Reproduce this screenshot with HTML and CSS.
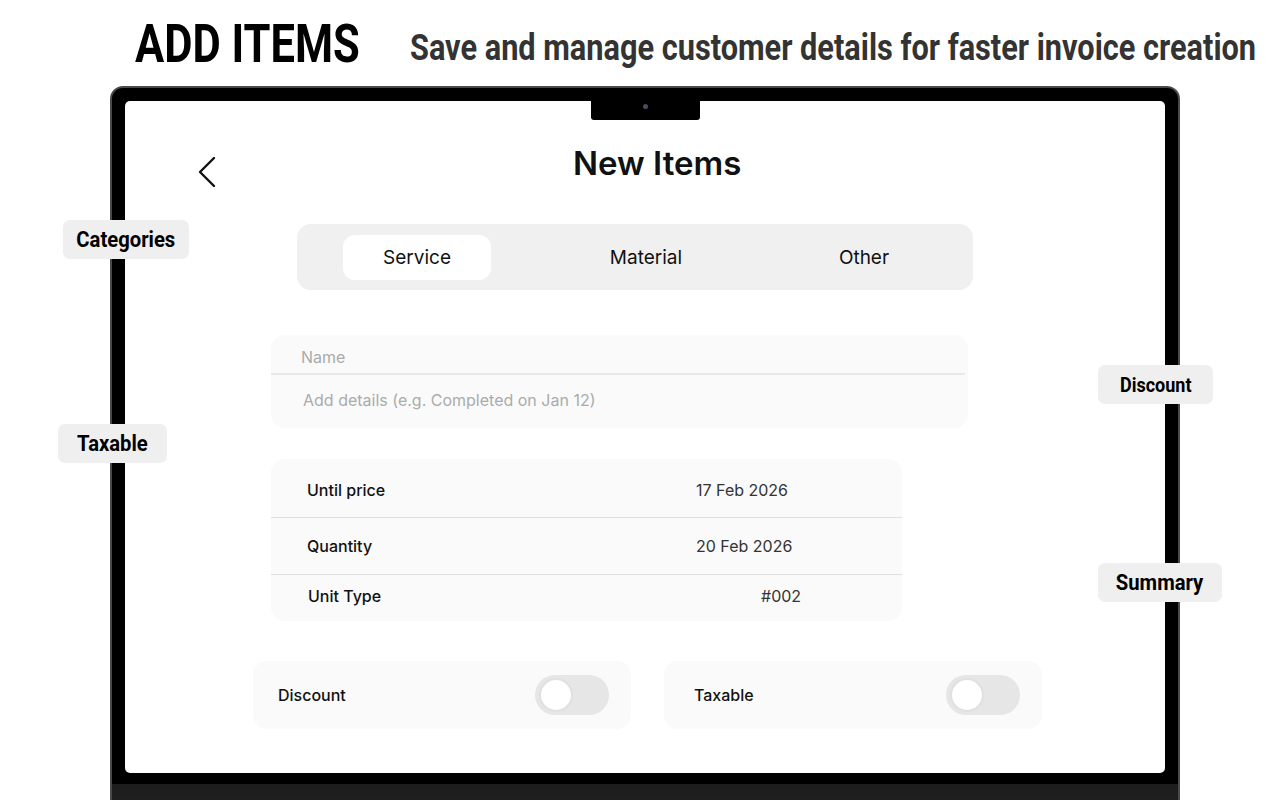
FILE: index.html
```html
<!DOCTYPE html>
<html lang="en">
<head>
<meta charset="utf-8">
<title>Add Items</title>
<link rel="stylesheet" href="styles.css">
</head>
<body>
<header class="hero">
  <h1 class="hero-title"><span>ADD ITEMS</span></h1>
  <p class="hero-sub"><span>Save and manage customer details for faster invoice creation</span></p>
</header>

<div class="laptop">
  <div class="screen">
    <div class="notch"><span class="cam"></span></div>
    <div class="topbar">
      <svg class="back" width="20" height="32" viewBox="0 0 20 32"><polyline points="17,2 3,16 17,30" fill="none" stroke="#111" stroke-width="2.4" stroke-linecap="round" stroke-linejoin="round"/></svg>
      <h2 class="title">New Items</h2>
    </div>

    <div class="segmented">
      <div class="seg seg-1 active">Service</div>
      <div class="seg seg-2">Material</div>
      <div class="seg seg-3">Other</div>
    </div>

    <div class="card name-card">
      <div class="name-row">Name</div>
      <div class="divider"></div>
      <div class="details-row">Add details (e.g. Completed on Jan 12)</div>
    </div>

    <div class="card table-card">
      <div class="trow trow-1"><span class="tlabel">Until price</span><span class="tval">17 Feb 2026</span></div>
      <div class="divider"></div>
      <div class="trow trow-2"><span class="tlabel">Quantity</span><span class="tval">20 Feb 2026</span></div>
      <div class="divider"></div>
      <div class="trow trow-3"><span class="tlabel tlabel-3">Unit Type</span><span class="tval tval-3">#002</span></div>
    </div>

    <div class="toggles">
      <div class="card toggle-card tc-1"><span class="tg-label">Discount</span><span class="switch"><span class="knob"></span></span></div>
      <div class="card toggle-card tc-2"><span class="tg-label">Taxable</span><span class="switch"><span class="knob"></span></span></div>
    </div>
  </div>
  <div class="chin"></div>
  <div class="base"></div>
</div>

<div class="tag tag-categories"><span>Categories</span></div>
<div class="tag tag-taxable"><span>Taxable</span></div>
<div class="tag tag-discount"><span>Discount</span></div>
<div class="tag tag-summary"><span>Summary</span></div>
</body>
</html>
```
FILE: styles.css
```css
html, body {
  margin: 0;
  padding: 0;
  background: #ffffff;
  overflow: hidden;
  height: 800px;
}
body {
  position: relative;
  font-family: "Inter", "Noto Sans", sans-serif;
  color: #111;
}

/* header */
.hero {
  height: 86px;
  box-sizing: border-box;
  padding-left: 135px;
  padding-top: 18px;
  display: flex;
  align-items: flex-start;
  white-space: nowrap;
  overflow: hidden;
}
.hero-title {
  margin: 0;
  width: 275px;
  flex: none;
  font-family: "Roboto", "Liberation Sans", sans-serif;
  font-weight: 700;
  font-size: 53px;
  line-height: 53px;
  color: #000;
}
.hero-title span {
  display: inline-block;
  transform: scaleX(0.82);
  transform-origin: left center;
}
.hero-sub span {
  display: inline-block;
  transform: scaleX(0.83);
  transform-origin: left center;
}
.hero-sub {
  margin: 0;
  flex: none;
  font-family: "Roboto", "Liberation Sans", sans-serif;
  font-weight: 700;
  font-size: 37px;
  line-height: 59px;
  color: #333;
}

/* laptop */
.laptop {
  margin-left: 110px;
  width: 1070px;
  box-sizing: border-box;
  border: 2px solid #4a4a4a;
  border-bottom: 0;
  border-radius: 13px 13px 0 0;
  background: #000;
  padding: 13px 13px 0;
}
.screen {
  position: relative;
  height: 672px;
  background: #fff;
  border-radius: 5px;
  overflow: hidden;
}
.chin {
  height: 11px;
  background: #000;
}
.base {
  height: 30px;
  margin: 0 -13px;
  background: linear-gradient(#1c1c1c, #222);
}
.notch {
  position: absolute;
  top: 0;
  left: 466px;
  width: 109px;
  height: 19px;
  background: #000;
  border-radius: 0 0 3px 3px;
}
.cam {
  position: absolute;
  left: 52px;
  top: 3px;
  width: 5px;
  height: 5px;
  border-radius: 50%;
  background: #4a4a62;
}

/* top bar */
.topbar {
  display: flex;
  align-items: flex-start;
  height: 123px;
}
.back {
  margin: 55px 0 0 72px;
  flex: none;
}
.title {
  margin: 41px 0 0 356px;
  font-size: 33px;
  line-height: 42px;
  font-weight: 600;
  color: #111;
}

/* segmented */
.segmented {
  margin-left: 172px;
  width: 676px;
  height: 66px;
  box-sizing: border-box;
  background: #f0f0f0;
  border-radius: 14px;
  display: flex;
  align-items: center;
  padding-left: 46px;
}
.seg {
  width: 148px;
  height: 45px;
  border-radius: 12px;
  display: flex;
  align-items: center;
  justify-content: center;
  font-size: 19px;
  color: #111;
}
.seg.active { background: #fff; }
.seg-2 { margin-left: 81px; }
.seg-3 { margin-left: 70px; }

/* cards */
.card {
  background: #fafafa;
  border-radius: 14px;
}
.divider {
  height: 2px;
  background: #e8e8e8;
}
.name-card {
  margin: 45px 0 0 146px;
  width: 697px;
  height: 93px;
  font-size: 16px;
  color: #ababab;
}
.name-card .divider { margin-right: 3px; }
.name-row {
  height: 32px;
  padding-top: 6px;
  display: flex;
  align-items: center;
  padding-left: 30px;
}
.details-row {
  height: 49px;
  padding-bottom: 4px;
  display: flex;
  align-items: center;
  padding-left: 32px;
}

.table-card {
  margin: 31px 0 0 146px;
  width: 631px;
  height: 162px;
  font-size: 16px;
}
.table-card .divider {
  height: 1px;
  background: #e0e0e0;
}
.trow {
  display: flex;
  align-items: center;
  padding-left: 36px;
}
.trow-1 { height: 54px; padding-top: 4px; }
.trow-2 { height: 56px; }
.trow-3 { height: 42px; padding-bottom: 4px; }
.tlabel {
  width: 389px;
  flex: none;
  font-weight: 500;
  color: #111;
}
.tlabel-3 { margin-left: 1px; width: 388px; }
.tval {
  color: #333;
}
.tval-3 { margin-left: 65px; }

/* toggles */
.toggles {
  display: flex;
  margin: 40px 0 0 128px;
  gap: 33px;
}
.toggle-card {
  width: 378px;
  height: 68px;
  box-sizing: border-box;
  display: flex;
  align-items: center;
  justify-content: space-between;
  padding-right: 22px;
  font-size: 16px;
  font-weight: 500;
  color: #111;
}
.tc-1 { padding-left: 25px; }
.tc-2 { padding-left: 30px; }
.switch {
  width: 74px;
  height: 40px;
  border-radius: 20px;
  background: #e6e6e6;
  display: flex;
  align-items: center;
  padding-left: 4px;
  box-sizing: border-box;
}
.knob {
  width: 30px;
  height: 30px;
  border-radius: 50%;
  background: #fff;
  border: 2px solid #e0e0e0;
}

/* side tags */
.tag {
  position: absolute;
  height: 39px;
  display: flex;
  align-items: center;
  justify-content: center;
  background: #efefef;
  border-radius: 7px;
  font-family: "Roboto", "Liberation Sans", sans-serif;
  font-weight: 700;
  font-size: 22px;
  color: #000;
  white-space: nowrap;
}
.tag span {
  display: inline-block;
  transform: scaleX(0.92);
}
.tag-categories { left: 63px; top: 220px; width: 126px; }
.tag-taxable { left: 58px; top: 424px; width: 109px; }
.tag-discount { left: 1098px; top: 365px; width: 115px; font-size: 20px; }
.tag-discount span { transform: scaleX(0.9); }
.tag-summary { left: 1098px; top: 563px; width: 124px; }
```
